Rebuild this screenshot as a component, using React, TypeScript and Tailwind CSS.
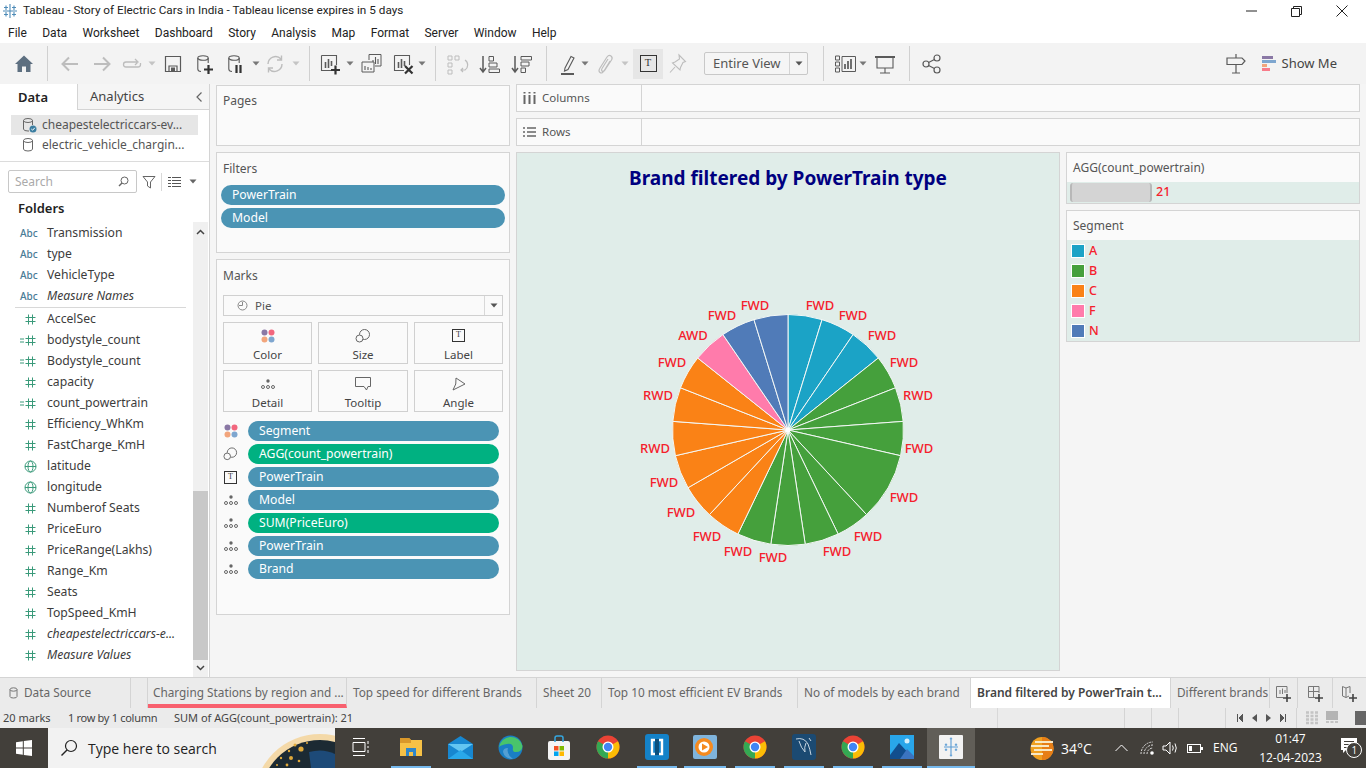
import React from "react";

const UI = "font-['Noto_Sans','Open_Sans',sans-serif]";

function polar(r: number, deg: number, cx = 272, cy = 226) {
  const a = ((deg - 90) * Math.PI) / 180;
  return [cx + r * Math.cos(a), cy + r * Math.sin(a)];
}

const COLORS: Record<string, string> = { A: "#1ba3c6", B: "#45a03c", C: "#fa8216", F: "#ff7bab", N: "#507bb8" };
const SLICES: [string, number][] = [
  ["A", 1], ["A", 1], ["A", 1],
  ["B", 1], ["B", 1], ["B", 1], ["B", 2], ["B", 1], ["B", 1], ["B", 1], ["B", 1],
  ["C", 1], ["C", 1], ["C", 1], ["C", 1], ["C", 1], ["C", 1],
  ["F", 1],
  ["N", 1], ["N", 1],
];
const LABELS: [string, number, number][] = [
  ["FWD", 820, 306], ["FWD", 853, 316], ["FWD", 882, 336], ["FWD", 904, 363], ["RWD", 918, 396],
  ["FWD", 919, 449], ["FWD", 904, 498], ["FWD", 868, 537], ["FWD", 837, 552], ["FWD", 773, 558],
  ["FWD", 738, 552], ["FWD", 707, 537], ["FWD", 681, 513], ["FWD", 664, 483], ["RWD", 655, 449],
  ["RWD", 658, 396], ["FWD", 672, 363], ["AWD", 693, 336], ["FWD", 722, 316], ["FWD", 755, 306],
];

function Pie() {
  let acc = 0;
  const unit = 360 / 21;
  return (
    <svg viewBox="517 204 542 466" className="block w-full flex-1">
      {SLICES.map(([k, n], i) => {
        const s = acc * unit;
        acc += n;
        const e = acc * unit;
        const [x1, y1] = polar(115.5, s, 788, 430);
        const [x2, y2] = polar(115.5, e, 788, 430);
        return (
          <path key={i} d={`M788 430 L${x1} ${y1} A115.5 115.5 0 0 1 ${x2} ${y2} Z`} fill={COLORS[k]} stroke="#f4f8f6" strokeWidth="1" />
        );
      })}
      <circle cx="788" cy="430" r="2.5" fill="#fff" />
      {LABELS.map(([t, x, y], i) => (
        <text key={i} x={x} y={y + 4} textAnchor="middle" fontSize="13" fontWeight="500" fill="#f5202c" fontFamily="'Noto Sans',sans-serif">
          {t}
        </text>
      ))}
    </svg>
  );
}

type IC = { c?: string };
const G = "#5a5a5a";
const D = "#bdbdbd";

const Svg = ({ children, w = 24, h = 24 }: { children: React.ReactNode; w?: number; h?: number }) => (
  <svg width={w} height={h} viewBox={`0 0 ${w} ${h}`} fill="none" className="block">
    {children}
  </svg>
);

const Home = () => (
  <Svg><path d="M12 3.5 L21 12 H18.5 V20 H14 V14.5 H10 V20 H5.5 V12 H3 Z" fill="#5d6f80" /></Svg>
);
const Back = () => (
  <Svg><path d="M20 12 H5 M11 5.5 L4.5 12 L11 18.5" stroke={D} strokeWidth="2" /></Svg>
);
const Fwd = () => (
  <Svg><path d="M4 12 H19 M13 5.5 L19.5 12 L13 18.5" stroke={D} strokeWidth="2" /></Svg>
);
const Redo = () => (
  <Svg><path d="M17 10 H6 Q3.5 10 3.5 12.5 Q3.5 15 6 15 H18 Q20.5 15 20.5 12.5 V11 M15 7 L18 10 L15 13" stroke={D} strokeWidth="1.3" /></Svg>
);
const Save = () => (
  <Svg><path d="M4.5 4.5 H19.5 V19.5 H4.5 Z" stroke={G} strokeWidth="1.2" /><path d="M8 19.5 V14 H16 V19.5" stroke={G} strokeWidth="1.2" /><rect x="10" y="15.5" width="4" height="4" fill={G} /></Svg>
);
const Db = ({ c = G }: IC) => (
  <>
    <ellipse cx="10" cy="6" rx="5.2" ry="2.3" stroke={c} strokeWidth="1.1" />
    <path d="M4.8 6 V17 Q4.8 19.5 8 19.5 M15.2 6 V11" stroke={c} strokeWidth="1.1" />
  </>
);
const NewDs = () => (
  <Svg><Db /><path d="M11 17.5 H20 M15.5 13 V22" stroke="#333" strokeWidth="2.2" /></Svg>
);
const PauseDs = () => (
  <Svg><Db /><path d="M12.5 13 V21 M16.5 13 V21" stroke="#333" strokeWidth="2.2" /></Svg>
);
const Refresh = () => (
  <Svg><path d="M5 12 A7.5 7.5 0 0 1 18 7 M19 12 A7.5 7.5 0 0 1 6 17 M18.5 3.5 V8 H14 M5.5 20.5 V16 H10" stroke={D} strokeWidth="1.4" /></Svg>
);
const Bars = ({ c = G }: IC) => (
  <>
    <path d="M3.5 3.5 H18.5 V13 M13 18.5 H3.5 V3.5" stroke={c} strokeWidth="1.1" />
    <path d="M7.5 10 V16 M10.5 7 V16 M13.5 9 V14" stroke={c} strokeWidth="1.6" />
  </>
);
const NewWs = () => (
  <Svg><Bars /><path d="M13 18 H22 M17.5 13.5 V22.5" stroke="#333" strokeWidth="2.2" /></Svg>
);
const Dup = () => (
  <Svg>
    <path d="M10 8 V2.5 H22 V14 H16" stroke={G} strokeWidth="1" />
    <path d="M14 8 V12 M16.5 5 V12 M19 7 V12" stroke={G} strokeWidth="1.1" />
    <path d="M3 10 H15 V20 H3 Z" fill="#f3f3f3" stroke={G} strokeWidth="1" />
    <path d="M6 14 V18 M9 15 V18 M12 16 V18" stroke={G} strokeWidth="1.1" />
  </Svg>
);
const Clear = () => (
  <Svg><Bars /><path d="M14 14 L21.5 21.5 M21.5 14 L14 21.5" stroke="#333" strokeWidth="2.2" /></Svg>
);
const Group = () => (
  <Svg>
    <path d="M3 4 H7 V8 H3 Z M10 4 H14 V8 H10 Z M3 11 H7 V15 H3 Z M3 18 H7 V22 H3 Z" stroke={D} strokeWidth="1" />
    <path d="M20 8 A6 6 0 0 1 20 18 L16 18 M18 16 L16 18 L18 20" stroke={D} strokeWidth="1.2" />
  </Svg>
);
const SortA = () => (
  <Svg>
    <path d="M5 4 V19 M2 16 L5 20 L8 16" stroke={G} strokeWidth="1.5" />
    <path d="M11 4.5 H15.5 V9 H11 Z M11 11 H19 V15 H11 Z M11 17 H21.5 V20.5 H11 Z" stroke={G} strokeWidth="1" />
  </Svg>
);
const SortD = () => (
  <Svg>
    <path d="M5 4 V19 M2 16 L5 20 L8 16" stroke={G} strokeWidth="1.5" />
    <path d="M11 4.5 H21.5 V8 H11 Z M11 10 H19 V14 H11 Z M11 16 H15.5 V20.5 H11 Z" stroke={G} strokeWidth="1" />
  </Svg>
);
const Pen = () => (
  <Svg>
    <path d="M9 16 L15 4.5 L18 6 L12 17.5 L8.5 19 Z" stroke={G} strokeWidth="1.1" />
    <path d="M5 22 H18" stroke={G} strokeWidth="2" />
  </Svg>
);
const Clip = () => (
  <Svg><path d="M17 9 L11 19 Q9 22 7 20.5 Q5 19 7 16 L14 5 Q16 2.5 18 4 Q20 5.5 18.5 8 L11.5 18.5 Q10 20 9 19 Q8 18 9 16.5 L15 7" stroke={D} strokeWidth="1.2" /></Svg>
);
const TBox = ({ s = 17 }: { s?: number }) => (
  <span className="relative flex items-center justify-center border border-[#333] font-['Liberation_Serif',serif] text-[#333]" style={{ width: s, height: s, fontSize: s * 0.62, lineHeight: 1 }}>
    T
  </span>
);
const Pin = () => (
  <Svg><path d="M14 3 L20.5 9.5 L18 10.5 L15.5 15.5 L15 18 L7.5 11 L10 10 L14.5 7 Z M10 15 L5 20.5" stroke={D} strokeWidth="1.1" /></Svg>
);
const Cards = () => (
  <Svg>
    <path d="M1.5 4 H5.5 V8 H1.5 Z M1.5 10 H5.5 V14 H1.5 Z M1.5 16 H5.5 V20 H1.5 Z M8 4.5 H21.5 V19.5 H8 Z" stroke={G} strokeWidth="1" />
    <path d="M11 12 V17 M14 9 V17 M17 7 V17" stroke={G} strokeWidth="1.7" />
  </Svg>
);
const Pres = () => (
  <Svg>
    <path d="M2 5 H22" stroke={G} strokeWidth="2" />
    <path d="M4 5 V16 H20 V5 M12 16 V21 M7 21 H17" stroke={G} strokeWidth="1.1" />
  </Svg>
);
const Share = () => (
  <Svg>
    <circle cx="6" cy="12" r="3" stroke={G} strokeWidth="1.2" />
    <circle cx="17" cy="6" r="3" stroke={G} strokeWidth="1.2" />
    <circle cx="17" cy="18" r="3" stroke={G} strokeWidth="1.2" />
    <path d="M8.6 10.5 L14.4 7.5 M8.6 13.5 L14.4 16.5" stroke={G} strokeWidth="1.2" />
  </Svg>
);
const Sign = () => (
  <Svg>
    <path d="M3 6 H18 L21 9 L18 12.5 H3 Z M12 2 V6 M12 12.5 V21 M8 21 H16" stroke={G} strokeWidth="1.2" />
  </Svg>
);

const Drop = ({ c = "#777", cls = "" }: { c?: string; cls?: string }) => (
  <svg width="8" height="5" viewBox="0 0 8 5" className={`block shrink-0 ${cls}`}><path d="M0.5 0.5 H7.5 L4 4.5 Z" fill={c} /></svg>
);
const Sep = ({ cls }: { cls: string }) => <div className={`h-[35px] w-px bg-[#d0d0d0] shrink-0 ${cls}`} />;
const Tool = ({ cls, children }: { cls: string; children: React.ReactNode }) => (
  <div className={`w-6 h-6 shrink-0 flex items-center justify-center ${cls}`}>{children}</div>
);
const DropBox = ({ cls, c }: { cls: string; c?: string }) => (
  <div className={`w-2 shrink-0 ${cls}`}><Drop c={c} /></div>
);

function Toolbar() {
  return (
    <div className="h-[41px] bg-[#f3f3f3] flex items-center shrink-0">
      <Tool cls="ml-[12px]"><Home /></Tool>
      <Sep cls="ml-[11px]" />
      <Tool cls="ml-[10px]"><Back /></Tool>
      <Tool cls="ml-[8px]"><Fwd /></Tool>
      <Tool cls="ml-[6px]"><Redo /></Tool>
      <DropBox cls="ml-[4px]" c="#c4c4c4" />
      <Tool cls="ml-[5px]"><Save /></Tool>
      <Tool cls="ml-[8px]"><NewDs /></Tool>
      <Tool cls="ml-[7px]"><PauseDs /></Tool>
      <DropBox cls="ml-[4px]" />
      <Tool cls="ml-[3px]"><Refresh /></Tool>
      <DropBox cls="ml-[5px]" c="#c4c4c4" />
      <Sep cls="ml-[9px]" />
      <Tool cls="ml-[8px]"><NewWs /></Tool>
      <DropBox cls="ml-[4px]" />
      <Tool cls="ml-[5px]"><Dup /></Tool>
      <Tool cls="ml-[8px]"><Clear /></Tool>
      <DropBox cls="ml-[3px]" />
      <Sep cls="ml-[9px]" />
      <Tool cls="ml-[9px]"><Group /></Tool>
      <Tool cls="ml-[9px]"><SortA /></Tool>
      <Tool cls="ml-[8px]"><SortD /></Tool>
      <Sep cls="ml-[12px]" />
      <Tool cls="ml-[9px]"><Pen /></Tool>
      <DropBox cls="ml-[1px]" />
      <Tool cls="ml-[4px]"><Clip /></Tool>
      <DropBox cls="ml-[4px]" c="#c4c4c4" />
      <div className="ml-[4px] w-[30px] h-[30px] bg-[#e6e6e6] flex items-center justify-center shrink-0"><TBox /></div>
      <Tool cls="ml-[2px]"><Pin /></Tool>
      <div className="ml-[15px] w-[104px] h-[23px] border border-[#c8c8c8] rounded-[2px] flex items-center shrink-0 bg-[#f5f5f5]">
        <span className="flex-1 pl-2 text-[13px] text-[#555] leading-none">Entire View</span>
        <span className="w-[18px] h-full border-l border-[#d4d4d4] flex items-center justify-center"><Drop c="#555" /></span>
      </div>
      <Sep cls="ml-[15px]" />
      <Tool cls="ml-[10px]"><Cards /></Tool>
      <DropBox cls="ml-[1px]" />
      <Tool cls="ml-[6px]"><Pres /></Tool>
      <Sep cls="ml-[12px]" />
      <Tool cls="ml-[10px]"><Share /></Tool>
      <div className="ml-auto flex items-center pr-[29px]">
        <Sign />
        <div className="ml-[14px] w-[14px] flex flex-col gap-[1px]">
          <span className="block h-[3px] w-[11px] bg-[#8a78a5]" />
          <span className="block h-[3px] w-[14px] bg-[#7ea6cf]" />
          <span className="block h-[3px] w-[5px] bg-[#f2a57c]" />
          <span className="block h-[3px] w-[8px] bg-[#f87c8a]" />
        </div>
        <span className="ml-[6px] text-[13px] text-[#444]">Show Me</span>
      </div>
    </div>
  );
}

const Abc = () => <span className="text-[10px] text-[#4a7c96] font-medium">Abc</span>;
const Hash = ({ calc }: { calc?: boolean }) => (
  <svg width="18" height="11" viewBox="0 0 18 11" className="block">
    {calc && <path d="M0 4 H4 M0 7 H4" stroke="#3a9a7a" strokeWidth="1" />}
    <path d="M8.5 0.5 V10.5 M12.5 0.5 V10.5 M5.5 3.5 H15.5 M5.5 7.5 H15.5" stroke="#3a9a7a" strokeWidth="1" />
  </svg>
);
const Globe = () => (
  <svg width="13" height="13" viewBox="0 0 13 13" className="block ml-[4px]">
    <circle cx="6.5" cy="6.5" r="5.5" stroke="#3a9a7a" fill="none" />
    <ellipse cx="6.5" cy="6.5" rx="2.5" ry="5.5" stroke="#3a9a7a" fill="none" />
    <path d="M1 6.5 H12" stroke="#3a9a7a" />
  </svg>
);

type F = [string, "a" | "h" | "c" | "g", boolean?];
const DIMS: F[] = [["Transmission", "a"], ["type", "a"], ["VehicleType", "a"], ["Measure Names", "a", true]];
const MEAS: F[] = [
  ["AccelSec", "h"], ["bodystyle_count", "c"], ["Bodystyle_count", "c"], ["capacity", "h"], ["count_powertrain", "c"],
  ["Efficiency_WhKm", "h"], ["FastCharge_KmH", "h"], ["latitude", "g"], ["longitude", "g"], ["Numberof Seats", "h"],
  ["PriceEuro", "h"], ["PriceRange(Lakhs)", "h"], ["Range_Km", "h"], ["Seats", "h"], ["TopSpeed_KmH", "h"],
  ["cheapestelectriccars-e...", "h", true], ["Measure Values", "h", true],
];
const Field = ({ f }: { f: F }) => (
  <div className="h-[21px] flex items-center shrink-0">
    <span className="w-[47px] pl-[20px] flex items-center">
      {f[1] === "a" ? <Abc /> : f[1] === "g" ? <Globe /> : <Hash calc={f[1] === "c"} />}
    </span>
    <span className={`text-[12.2px] text-[#3c3c3c] whitespace-nowrap ${f[2] ? "italic" : ""}`}>{f[0]}</span>
  </div>
);

function DataPane() {
  return (
    <aside className="w-[210px] shrink-0 border-r border-[#d4d4d4] bg-white flex flex-col">
      <div className="h-[26px] flex shrink-0">
        <div className="w-[77px] flex items-center pl-[18px] pt-[1px] text-[13px] font-semibold text-[#222]">Data</div>
        <div className="flex-1 bg-[#f5f5f5] border-l border-b border-[#d4d4d4] flex items-center pl-[12px] pr-[6px] pt-[1px] text-[13px] text-[#444]">
          <span className="flex-1">Analytics</span>
          <svg width="8" height="12" viewBox="0 0 8 12"><path d="M6.5 1.5 L2 6 L6.5 10.5" stroke="#666" fill="none" strokeWidth="1.2" /></svg>
        </div>
      </div>
      <div className="pt-[5px] pb-[6px] pl-[11px] pr-[11px] border-b border-[#dcdcdc] shrink-0">
        <div className="h-[20px] bg-[#e6e6e6] flex items-center">
          <span className="w-[31px] pl-[11px]">
            <svg width="16" height="16" viewBox="0 0 16 16" className="block">
              <ellipse cx="6" cy="3.5" rx="4.5" ry="2" stroke="#666" fill="none" />
              <path d="M1.5 3.5 V12 Q1.5 14 6 14 H7 M10.5 3.5 V8" stroke="#666" fill="none" />
              <circle cx="11" cy="12" r="3.5" fill="#3b7ea1" />
              <path d="M9.3 12 L10.6 13.2 L12.8 10.8" stroke="#fff" fill="none" />
            </svg>
          </span>
          <span className="text-[12px] text-[#555] whitespace-nowrap">cheapestelectriccars-ev...</span>
        </div>
        <div className="h-[20px] flex items-center">
          <span className="w-[31px] pl-[11px]">
            <svg width="12" height="16" viewBox="0 0 12 16" className="block">
              <ellipse cx="6" cy="3.5" rx="4.5" ry="2" stroke="#666" fill="none" />
              <path d="M1.5 3.5 V12 Q1.5 14 6 14 Q10.5 14 10.5 12 V3.5" stroke="#666" fill="none" />
            </svg>
          </span>
          <span className="text-[12px] text-[#555] whitespace-nowrap">electric_vehicle_chargin...</span>
        </div>
      </div>
      <div className="flex items-center pl-[8px] pt-[8px] shrink-0">
        <div className="w-[129px] h-[23px] border border-[#c8c8c8] rounded-[2px] flex items-center pl-[6px] pr-[7px]">
          <span className="flex-1 text-[12px] text-[#aaa] pt-[1px]">Search</span>
          <svg width="11" height="11" viewBox="0 0 11 11"><circle cx="6.5" cy="4.5" r="3.5" stroke="#666" fill="none" /><path d="M4 7 L1 10" stroke="#666" strokeWidth="1.4" /></svg>
        </div>
        <svg width="14" height="14" viewBox="0 0 14 14" className="ml-[5px]"><path d="M1 1.5 H13 L8.5 7 V13 L5.5 11 V7 Z" stroke="#666" fill="none" /></svg>
        <div className="ml-[5px] w-px h-[18px] bg-[#d8d8d8]" />
        <svg width="13" height="10" viewBox="0 0 13 10" className="ml-[6px]"><path d="M0 .5 H3 M4 .5 H13 M0 3.5 H3 M4 3.5 H13 M0 6.5 H3 M4 6.5 H13 M0 9.5 H3 M4 9.5 H13" stroke="#555" /></svg>
        <Drop c="#666" cls="ml-[8px]" />
      </div>
      <div className="h-[29px] flex items-center pl-[18px] pt-[3px] text-[13px] font-semibold text-[#222] shrink-0">Folders</div>
      <div className="flex-1 flex min-h-0">
        <div className="w-[193px] pt-[1px] overflow-hidden">
          {DIMS.map((f) => <Field key={f[0]} f={f} />)}
          <div className="h-px bg-[#d8d8d8] ml-[15px] mr-[7px] mb-[1px]" />
          {MEAS.map((f) => <Field key={f[0]} f={f} />)}
        </div>
        <div className="w-[15px] bg-[#f0f0f0] flex flex-col items-center">
          <svg width="9" height="6" viewBox="0 0 9 6" className="mt-[7px] shrink-0"><path d="M1 5 L4.5 1.5 L8 5" stroke="#444" strokeWidth="1.5" fill="none" /></svg>
          <div className="mt-[256px] w-full h-[169px] bg-[#c8c8c8] shrink-0" />
          <svg width="9" height="6" viewBox="0 0 9 6" className="mt-[5px] shrink-0"><path d="M1 1 L4.5 4.5 L8 1" stroke="#444" strokeWidth="1.5" fill="none" /></svg>
        </div>
      </div>
    </aside>
  );
}

const Pill = ({ t, green, cls = "" }: { t: string; green?: boolean; cls?: string }) => (
  <div className={`h-5 rounded-full flex items-center text-[12.2px] text-white ${green ? "bg-[#00b181]" : "bg-[#4b94b4]"} ${cls}`}>{t}</div>
);
const Dots = () => (
  <svg width="14" height="14" viewBox="0 0 14 14" className="block">
    <circle cx="3.5" cy="3.5" r="3" fill="#8a78a5" /><circle cx="10.5" cy="3.5" r="3" fill="#f2677e" />
    <circle cx="3.5" cy="10.5" r="3" fill="#f2a57c" /><circle cx="10.5" cy="10.5" r="3" fill="#7ea6cf" />
  </svg>
);
const SizeI = () => (
  <svg width="16" height="14" viewBox="0 0 16 14" className="block">
    <circle cx="9.5" cy="5.5" r="5" stroke="#666" fill="none" /><circle cx="4.5" cy="9.5" r="3.5" stroke="#666" fill="#fafafa" />
  </svg>
);
const DetailI = () => (
  <svg width="14" height="10" viewBox="0 0 14 10" className="block">
    <circle cx="7" cy="2" r="1.7" fill="#666" />
    <circle cx="2" cy="8" r="1.5" stroke="#666" fill="none" /><circle cx="7" cy="8" r="1.5" stroke="#666" fill="none" /><circle cx="12" cy="8" r="1.5" stroke="#666" fill="none" />
  </svg>
);
const TipI = () => (
  <svg width="16" height="14" viewBox="0 0 16 14" className="block"><path d="M.5 .5 H15.5 V9.5 H13 L11.5 13 L9 9.5 H.5 Z" stroke="#666" fill="none" /></svg>
);
const AngleI = () => (
  <svg width="14" height="14" viewBox="0 0 14 14" className="block"><path d="M4 1 L13 7 L1 13 Q5 7 4 1 Z" stroke="#666" fill="none" /></svg>
);

const MarkBtn = ({ icon, t, cls }: { icon: React.ReactNode; t: string; cls: string }) => (
  <div className={`h-[42px] border border-[#d0d0d0] flex flex-col items-center ${cls}`}>
    <div className="h-[25px] flex items-center justify-center">{icon}</div>
    <span className="text-[11.5px] leading-[13px] text-[#444]">{t}</span>
  </div>
);
const MarkRow = ({ icon, t, green }: { icon: React.ReactNode; t: string; green?: boolean }) => (
  <div className="flex items-center">
    <span className="w-[15px] flex justify-center shrink-0">{icon}</span>
    <Pill t={t} green={green} cls="ml-[10px] w-[251px] pl-[11px]" />
  </div>
);
const Card = ({ cls, title, titleCls = "", children }: { cls: string; title: string; titleCls?: string; children?: React.ReactNode }) => (
  <div className={`border border-[#d4d4d4] bg-[#fafafa] shrink-0 ${cls}`}>
    <div className={`pl-[6px] h-[30px] flex items-center text-[12px] text-[#555] ${titleCls}`}>{title}</div>
    {children}
  </div>
);

function Shelves() {
  return (
    <div className="w-[294px] shrink-0 flex flex-col gap-[6px] ml-[6px] pt-[1px]">
      <Card cls="h-[61px]" titleCls="pb-[1px]" title="Pages" />
      <Card cls="h-[101px]" titleCls="pt-[1px]" title="Filters">
        <div className="flex flex-col gap-[3px] px-[4px] pt-[2px]">
          <Pill t="PowerTrain" cls="pl-[11px]" />
          <Pill t="Model" cls="pl-[11px]" />
        </div>
      </Card>
      <Card cls="h-[356px]" titleCls="pt-[1px]" title="Marks">
        <div className="px-[6px] pt-[5px]">
          <div className="h-[21px] border border-[#d0d0d0] flex items-center">
            <svg width="11" height="11" viewBox="0 0 11 11" className="ml-[13px]"><circle cx="5.5" cy="5.5" r="4.5" stroke="#888" fill="none" /><path d="M5.5 2 V5.5 H2" stroke="#888" fill="none" /></svg>
            <span className="ml-[7px] flex-1 text-[11.5px] text-[#555]">Pie</span>
            <span className="w-[18px] h-full border-l border-[#d8d8d8] flex items-center justify-center"><Drop c="#555" /></span>
          </div>
          <div className="flex gap-[6px] mt-[6px]">
            <MarkBtn cls="w-[89px]" icon={<Dots />} t="Color" />
            <MarkBtn cls="w-[90px]" icon={<SizeI />} t="Size" />
            <MarkBtn cls="w-[89px]" icon={<TBox s={13} />} t="Label" />
          </div>
          <div className="flex gap-[6px] mt-[6px]">
            <MarkBtn cls="w-[89px]" icon={<DetailI />} t="Detail" />
            <MarkBtn cls="w-[90px]" icon={<TipI />} t="Tooltip" />
            <MarkBtn cls="w-[89px]" icon={<AngleI />} t="Angle" />
          </div>
          <div className="flex flex-col gap-[3px] mt-[9px]">
            <MarkRow icon={<Dots />} t="Segment" />
            <MarkRow icon={<SizeI />} t="AGG(count_powertrain)" green />
            <MarkRow icon={<TBox s={13} />} t="PowerTrain" />
            <MarkRow icon={<DetailI />} t="Model" />
            <MarkRow icon={<DetailI />} t="SUM(PriceEuro)" green />
            <MarkRow icon={<DetailI />} t="PowerTrain" />
            <MarkRow icon={<DetailI />} t="Brand" />
          </div>
        </div>
      </Card>
    </div>
  );
}

const ShelfRow = ({ icon, t }: { icon: React.ReactNode; t: string }) => (
  <div className="h-[28px] border border-[#d4d4d4] bg-[#fafafa] flex shrink-0">
    <div className="w-[125px] border-r border-[#d4d4d4] flex items-center pl-[6px]">
      <span className="w-[19px] flex">{icon}</span>
      <span className="text-[11.5px] text-[#555]">{t}</span>
    </div>
  </div>
);

const Legend = () => (
  <div className="w-[294px] shrink-0 flex flex-col gap-[6px]">
    <div className="h-[52px] border border-[#d4d4d4] bg-[#fafafa]">
      <div className="h-[29px] pl-[6px] pt-[1px] flex items-center text-[12px] text-[#555]">AGG(count_powertrain)</div>
      <div className="h-[21px] bg-[#e0ede9] flex items-center pl-[3px]">
        <div className="w-[82px] h-[19px] bg-[#d4d4d4] rounded-[3px] border-x-2 border-[#b8b8b8]" />
        <span className="ml-[4px] text-[12.5px] font-medium text-[#f5202c]">21</span>
      </div>
    </div>
    <div className="h-[132px] border border-[#d4d4d4] bg-[#fafafa]">
      <div className="h-[29px] pl-[6px] pt-[1px] flex items-center text-[12px] text-[#555]">Segment</div>
      <div className="h-[101px] bg-[#e0ede9] pl-[4px] pt-[1px]">
        {Object.keys(COLORS).map((k) => (
          <div key={k} className="h-5 flex items-center">
            <span className="w-[14px] h-[14px] border border-white" style={{ background: COLORS[k] }} />
            <span className="ml-[4px] text-[12.5px] font-medium text-[#f5202c]">{k}</span>
          </div>
        ))}
      </div>
    </div>
  </div>
);

const TABS: [string, string][] = [
  ["Top speed for different Brands", "w-[190px]"],
  ["Sheet 20", "w-[65px]"],
  ["Top 10 most efficient EV Brands", "w-[196px]"],
  ["No of models by each brand", "w-[173px]"],
];

function Tabs() {
  return (
    <div className="h-[31px] bg-[#ebebeb] border-t border-[#d4d4d4] flex shrink-0 text-[11.8px] text-[#666] whitespace-nowrap">
      <div className="w-[131px] border-r border-[#d4d4d4] flex items-center pl-[9px]">
        <svg width="9" height="12" viewBox="0 0 9 12"><ellipse cx="4.5" cy="2.5" rx="3.5" ry="1.7" stroke="#777" fill="none" /><path d="M1 2.5 V9.5 Q1 11 4.5 11 Q8 11 8 9.5 V2.5" stroke="#777" fill="none" /></svg>
        <span className="ml-[6px]">Data Source</span>
      </div>
      <div className="w-[17px] border-r border-[#d4d4d4]" />
      <div className="w-[199px] border-r border-[#d4d4d4] border-b-4 border-b-[#f8606e] flex items-center pl-[5px] pt-[3px]">Charging Stations by region and ...</div>
      {TABS.map(([t, w]) => (
        <div key={t} className={`${w} border-r border-[#d4d4d4] flex items-center pl-[6px]`}>{t}</div>
      ))}
      <div className="w-[200px] bg-white border-r border-[#d4d4d4] flex items-center pl-[6px] font-semibold text-[12px] text-[#444]">Brand filtered by PowerTrain t...</div>
      <div className="w-[99px] border-r border-[#d4d4d4] flex items-center pl-[6px] overflow-hidden">Different brands</div>
      <div className="w-[28px] border-r border-[#d4d4d4] flex items-center justify-center">
        <svg width="17" height="17" viewBox="0 0 17 17"><path d="M1.5 1.5 H12 V8 M8 12.5 H1.5 V1.5 M5 9 V5 M7.5 9 V3.5 M10 8 V5" stroke="#777" fill="none" /><path d="M8 13 H16 M12 9 V17" stroke="#444" strokeWidth="1.6" /></svg>
      </div>
      <div className="w-[35px] border-r border-[#d4d4d4] flex items-center justify-center">
        <svg width="17" height="17" viewBox="0 0 17 17"><path d="M1.5 1.5 H12 V8 M8 12.5 H1.5 V1.5 M6.5 1.5 V12.5 M1.5 6.5 H12" stroke="#777" fill="none" /><path d="M8 13 H16 M12 9 V17" stroke="#444" strokeWidth="1.6" /></svg>
      </div>
      <div className="flex-1 flex items-center justify-center">
        <svg width="17" height="17" viewBox="0 0 17 17"><path d="M1.5 1.5 L5 3 L9 1.5 V8 M8 11 L5 12.5 L1.5 11 V1.5 M5 3 V12.5" stroke="#777" fill="none" /><path d="M8 13 H16 M12 9 V17" stroke="#444" strokeWidth="1.6" /></svg>
      </div>
    </div>
  );
}

function StatusBar() {
  const cell = "border-r border-[#d4d4d4] h-full";
  return (
    <div className="h-[20px] bg-[#ebebeb] flex items-center shrink-0 text-[11px] text-[#444] whitespace-nowrap">
      <div className="w-[999px] flex pl-[3px] border-r border-[#d8d8d8] h-full items-center">
        <span className="w-[65px]">20 marks</span>
        <span className="w-[106px] tracking-[-0.3px]">1 row by 1 column</span>
        <span>SUM of AGG(count_powertrain): 21</span>
      </div>
      <div className={`w-[127px] ${cell}`} />
      <div className={`w-[27px] ${cell}`} />
      <div className={`w-[27px] ${cell}`} />
      <div className={`w-[47px] ${cell}`} />
      <div className="w-[71px] border-r border-[#d4d4d4] h-full flex items-center justify-center gap-[9px]">
        <svg width="6" height="8" viewBox="0 0 6 8"><path d="M.5 0 V8 M6 0 L2 4 L6 8 Z" stroke="#555" fill="#555" /></svg>
        <svg width="5" height="8" viewBox="0 0 5 8"><path d="M5 0 L0 4 L5 8 Z" fill="#555" /></svg>
        <svg width="5" height="8" viewBox="0 0 5 8"><path d="M0 0 L5 4 L0 8 Z" fill="#555" /></svg>
        <svg width="6" height="8" viewBox="0 0 6 8"><path d="M5.5 0 V8 M0 0 L4 4 L0 8 Z" stroke="#555" fill="#555" /></svg>
      </div>
      <div className="flex-1 flex items-center pl-[9px] gap-[8px]">
        <svg width="12" height="14" viewBox="0 0 12 14"><path d="M0 1.5 H12 M0 5 H12 M0 8.5 H12 M0 12 H12" stroke="#c4c4c4" strokeWidth="2.4" strokeDasharray="3 1.5" /></svg>
        <svg width="12" height="14" viewBox="0 0 12 14"><rect width="12" height="9" fill="#b4b4b4" /><path d="M0 11 H12" stroke="#c4c4c4" strokeWidth="2" strokeDasharray="3 1.5" /></svg>
        <div className="ml-[9px] w-[11px] h-[14px] bg-[#666]" />
      </div>
    </div>
  );
}

const Chrome = () => (
  <svg width="24" height="24" viewBox="0 0 24 24" className="block">
    <circle cx="12" cy="12" r="11.5" fill="#ea4335" />
    <path d="M12 12 L22 6.3 A11.5 11.5 0 0 1 12 23.5 Z" fill="#fbbc05" />
    <path d="M12 12 L12 23.5 A11.5 11.5 0 0 1 2 6.3 Z" fill="#34a853" />
    <circle cx="12" cy="12" r="5.5" fill="#fff" />
    <circle cx="12" cy="12" r="4.2" fill="#4285f4" />
  </svg>
);
const TaskIcon = ({ w, on, children, cls = "" }: { w: string; on?: boolean; children: React.ReactNode; cls?: string }) => (
  <div className={`h-full shrink-0 flex items-center justify-center border-b-2 ${on ? "border-[#76b9ed]" : "border-transparent"} ${w} ${cls}`}>{children}</div>
);

function Taskbar() {
  return (
    <div className="h-[40px] bg-[#423f3a] flex items-center shrink-0 text-white font-['Open_Sans',sans-serif]">
      <div className="w-[48px] flex justify-center">
        <svg width="16" height="16" viewBox="0 0 16 16"><path d="M0 2.3 L6.8 1.3 V7.5 H0 Z M7.8 1.1 L16 0 V7.5 H7.8 Z M0 8.5 H6.8 V14.7 L0 13.7 Z M7.8 8.5 H16 V16 L7.8 14.9 Z" fill="#fff" /></svg>
      </div>
      <div className="w-[287px] h-full bg-[#f2f2f2] flex items-center overflow-hidden">
        <svg width="18" height="18" viewBox="0 0 18 18" className="ml-[12px] shrink-0"><circle cx="11" cy="7" r="5.5" stroke="#222" fill="none" strokeWidth="1.2" /><path d="M7 11 L1.5 16.5" stroke="#222" strokeWidth="1.4" /></svg>
        <span className="ml-[10px] text-[14px] text-[#222] whitespace-nowrap flex-1">Type here to search</span>
        <svg width="76" height="40" viewBox="0 0 76 40" className="shrink-0">
          <circle cx="61" cy="72" r="66" fill="#f4d9a8" />
          <circle cx="61" cy="72" r="60" fill="#1c2a33" />
          <path d="M50 24 Q64 20 76 26 V40 H52 Z" fill="#1d4a78" />
          <g fill="#e0a93a"><circle cx="30" cy="23" r="1.2" /><circle cx="36" cy="17" r="1.5" /><circle cx="42" cy="21" r="2.6" /><circle cx="22" cy="30" r="1.2" /><circle cx="32" cy="30" r="2" /><circle cx="40" cy="33" r="1.3" /><circle cx="18" cy="37" r="1" /><circle cx="48" cy="15" r="1" /><circle cx="28" cy="37" r="1.4" /></g>
        </svg>
      </div>
      <TaskIcon w="w-[50px]">
        <svg width="17" height="18" viewBox="0 0 17 18"><path d="M1 .5 H13 M1 17.5 H13 M1 4.5 H13 V13.5 H1 Z M16 3 V6 M16 8 V10 M16 12 V15" stroke="#fff" fill="none" /></svg>
      </TaskIcon>
      <TaskIcon w="w-[40px]" on cls="ml-[6px]">
        <svg width="22" height="22" viewBox="0 0 22 22"><path d="M0 2 H9 L11 4 H22 V20 H0 Z" fill="#f6c146" /><path d="M0 2 H9 L11 4 V7 H0 Z" fill="#d9982a" /><path d="M6 12 H16 V20 H13 V16 H9 V20 H6 Z" fill="#2f86c8" /></svg>
      </TaskIcon>
      <TaskIcon w="w-[50px]" cls="ml-[4px]">
        <svg width="25" height="23" viewBox="0 0 25 23"><path d="M0 8 L12.5 0 L25 8 V23 H0 Z" fill="#1787d0" /><path d="M0 8 H25 L12.5 16 Z" fill="#63c6f2" /><path d="M0 23 L12.5 14 L25 23 Z" fill="#29a8ea" /></svg>
      </TaskIcon>
      <TaskIcon w="w-[50px]">
        <svg width="25" height="25" viewBox="0 0 25 25"><circle cx="12.5" cy="12.5" r="12" fill="#1a7fc4" /><path d="M1 12 A12 12 0 0 1 24.5 11 Q24 17 18 17 Q14 17 15 13 Q15 8 9 9 Q3 10 1 12 Z" fill="#49c46b" /><path d="M5 17 Q7 24 15 24 Q8 19 10 13 Q5 13 5 17 Z" fill="#fff" opacity="0.25" /></svg>
      </TaskIcon>
      <TaskIcon w="w-[48px]">
        <svg width="22" height="25" viewBox="0 0 22 25"><rect y="6" width="22" height="19" rx="2" fill="#f4f4f4" /><path d="M7 7 V3 Q7 1 9 1 H13 Q15 1 15 3 V7" stroke="#35a7e0" strokeWidth="1.5" fill="none" /><rect x="6" y="11" width="4.5" height="4.5" fill="#f25022" /><rect x="11.5" y="11" width="4.5" height="4.5" fill="#7fba00" /><rect x="6" y="16.5" width="4.5" height="4.5" fill="#00a4ef" /><rect x="11.5" y="16.5" width="4.5" height="4.5" fill="#ffb900" /></svg>
      </TaskIcon>
      <TaskIcon w="w-[50px]"><Chrome /></TaskIcon>
      <TaskIcon w="w-[40px]" on cls="ml-[4px]">
        <svg width="24" height="26" viewBox="0 0 24 26"><rect width="24" height="26" rx="3" fill="#1482c8" /><path d="M10 6 H7 V20 H10 M14 6 H17 V20 H14" stroke="#fff" strokeWidth="2.4" fill="none" /><rect x="10" y="5" width="4" height="16" fill="#0b4f7c" /></svg>
      </TaskIcon>
      <TaskIcon w="w-[42px]" on cls="ml-[7px]">
        <svg width="24" height="24" viewBox="0 0 24 24"><rect width="24" height="24" rx="2" fill="#7fb4dc" /><circle cx="11" cy="12" r="9" fill="#f58a1f" /><circle cx="11" cy="12" r="5.5" fill="#fff" /><path d="M9 8.5 L15 12 L9 15.5 Z" fill="#f58a1f" /></svg>
      </TaskIcon>
      <TaskIcon w="w-[40px]" on cls="ml-[9px]"><Chrome /></TaskIcon>
      <TaskIcon w="w-[40px]" on cls="ml-[9px]">
        <svg width="24" height="26" viewBox="0 0 24 26"><rect width="24" height="26" rx="3" fill="#1b4a72" /><path d="M4 5 Q12 3 16 10 Q18 15 19 21 M7 7 Q9 14 13 18 Q12 13 14 9 M17 4 L19 7" stroke="#c7d6e2" strokeWidth="1" fill="none" /></svg>
      </TaskIcon>
      <TaskIcon w="w-[40px]" on cls="ml-[9px]"><Chrome /></TaskIcon>
      <TaskIcon w="w-[40px]" on cls="ml-[9px]">
        <svg width="24" height="24" viewBox="0 0 24 24"><rect width="24" height="24" fill="#29a6ea" /><circle cx="17" cy="6" r="2.5" fill="#d5effb" /><path d="M0 20 L9 8 L24 24 H0 Z" fill="#114e8e" /><path d="M10 24 L17 14 L24 21 V24 Z" fill="#3b74c0" /></svg>
      </TaskIcon>
      <TaskIcon w="w-[48px]" on cls="ml-[5px] bg-[#615e58]">
        <svg width="24" height="24" viewBox="0 0 24 24"><rect width="24" height="24" rx="1" fill="#f2f2f2" /><path d="M12 5 V19 M5 12 H19 M7 8.5 V11 M5.8 9.8 H8.2 M17 8.5 V11 M15.8 9.8 H18.2 M7 13.5 V16 M5.8 14.7 H8.2 M17 13.5 V16 M15.8 14.7 H18.2 M12 2.5 V5 M10.8 3.7 H13.2 M12 19 V21.5 M10.8 20.2 H13.2" stroke="#5a9bd4" strokeWidth="1.1" /></svg>
      </TaskIcon>
      <div className="ml-[53px] w-[28px] flex justify-center shrink-0">
        <svg width="26" height="27" viewBox="0 0 26 27"><circle cx="13" cy="13.5" r="11.5" fill="#f0a020" /><path d="M13 2 A11.5 11.5 0 0 1 13 25 Z" fill="#e77e16" /><path d="M6 7 H24 M2 11 H20 M5 15 H23 M2 19 H14" stroke="#f8e8c4" strokeWidth="2" /></svg>
      </div>
      <span className="ml-[5px] text-[14px] w-[28px] whitespace-nowrap">34°C</span>
      <svg width="13" height="8" viewBox="0 0 13 8" className="ml-[26px]"><path d="M.5 7 L6.5 1 L12.5 7" stroke="#fff" fill="none" /></svg>
      <svg width="14" height="14" viewBox="0 0 14 14" className="ml-[12px]"><path d="M1 13 A12 12 0 0 1 13 1 M4 13 A9 9 0 0 1 13 4 M7 13 A6 6 0 0 1 13 7" stroke="#ddd" fill="none" strokeDasharray="2 1" /><circle cx="12" cy="12" r="1.8" fill="#fff" /></svg>
      <svg width="16" height="14" viewBox="0 0 16 14" className="ml-[8px]"><path d="M1 5 H4 L8 1 V13 L4 9 H1 Z M10.5 4.5 Q12 7 10.5 9.5 M13 2.5 Q15.5 7 13 11.5" stroke="#fff" fill="none" /></svg>
      <svg width="16" height="9" viewBox="0 0 16 9" className="ml-[9px]"><rect x=".5" y=".5" width="13" height="8" stroke="#fff" fill="none" /><rect x="2" y="2" width="3" height="5" fill="#fff" /><rect x="14" y="3" width="2" height="3" fill="#fff" /></svg>
      <span className="ml-[10px] text-[12px]">ENG</span>
      <div className="ml-[17px] w-[72px] flex flex-col items-center text-[12px] leading-[19px]">
        <span>01:47</span>
        <span className="whitespace-nowrap">12-04-2023</span>
      </div>
      <div className="relative ml-[15px] w-[20px] h-[20px]">
        <svg width="16" height="15" viewBox="0 0 16 15"><path d="M0 0 H16 V12 H5 L2 15 V12 H0 Z" fill="#fff" /><path d="M3 3.5 H13 M3 6.5 H13 M3 9.5 H10" stroke="#423f3a" /></svg>
        <span className="absolute left-[5px] top-[4px] w-[16px] h-[16px] rounded-full border border-white bg-[#423f3a] text-[10px] leading-[14px] text-center">1</span>
      </div>
    </div>
  );
}

export default function App() {
  return (
    <div className={`w-[1366px] h-[768px] overflow-hidden flex flex-col bg-[#f5f5f5] ${UI}`}>
      <div className="h-[22px] bg-white flex items-center shrink-0 font-['Roboto',sans-serif]">
        <svg width="14" height="14" viewBox="0 0 14 14" className="ml-[3px]">
          <path d="M7 0 V14 M0 7 H14 M4.5 7 H9.5 M3 1.5 V6 M1 3.5 H5 M11 1.5 V6 M9 3.5 H13 M3 8 V12.5 M1 10.5 H5 M11 8 V12.5 M9 10.5 H13" stroke="#4f8cb8" strokeWidth="1.1" />
        </svg>
        <span className="ml-[6px] text-[11.75px] text-[#222] whitespace-nowrap">Tableau - Story of Electric Cars in India - Tableau license expires in 5 days</span>
        <div className="ml-auto flex items-center pr-[18px]">
          <svg width="11" height="2" viewBox="0 0 11 2"><path d="M0 1 H11" stroke="#222" /></svg>
          <svg width="11" height="11" viewBox="0 0 11 11" className="ml-[34px]"><path d="M.5 2.5 H8.5 V10.5 H.5 Z M2.5 2.5 V.5 H10.5 V8.5 H8.5" stroke="#222" fill="none" /></svg>
          <svg width="12" height="12" viewBox="0 0 12 12" className="ml-[34px]"><path d="M.5 .5 L11.5 11.5 M11.5 .5 L.5 11.5" stroke="#222" /></svg>
        </div>
      </div>
      <div className="h-[21px] bg-white flex items-center gap-[15.4px] pl-[8px] shrink-0 text-[12px] text-[#222] font-['Roboto',sans-serif]">
        {["File", "Data", "Worksheet", "Dashboard", "Story", "Analysis", "Map", "Format", "Server", "Window", "Help"].map((m) => (
          <span key={m}>{m}</span>
        ))}
      </div>
      <Toolbar />
      <div className="flex-1 min-h-0 flex">
        <DataPane />
        <Shelves />
        <div className="flex-1 min-w-0 pl-[6px] pr-[6px] pt-[0px] flex flex-col gap-[6px]">
          <ShelfRow t="Columns" icon={
            <svg width="13" height="12" viewBox="0 0 13 12"><path d="M1.5 3 V12 M6.5 3 V12 M11.5 3 V12 M1.5 0 V1.5 M6.5 0 V1.5 M11.5 0 V1.5" stroke="#666" strokeWidth="2" /></svg>
          } />
          <ShelfRow t="Rows" icon={
            <svg width="13" height="10" viewBox="0 0 13 10"><path d="M0 1 H2 M4 1 H13 M0 5 H2 M4 5 H13 M0 9 H2 M4 9 H13" stroke="#666" strokeWidth="1.5" /></svg>
          } />
          <div className="flex gap-[6px] flex-1 min-h-0 pb-[6px]">
            <div className="w-[544px] h-[519px] border border-[#d4d4d4] bg-[#e0ede9] flex flex-col shrink-0">
              <div className="h-[51px] pt-[9px] text-center text-[19px] font-bold leading-[32px] text-[#000080]">Brand filtered by PowerTrain type</div>
              <Pie />
            </div>
            <Legend />
          </div>
        </div>
      </div>
      <Tabs />
      <StatusBar />
      <Taskbar />
    </div>
  );
}
